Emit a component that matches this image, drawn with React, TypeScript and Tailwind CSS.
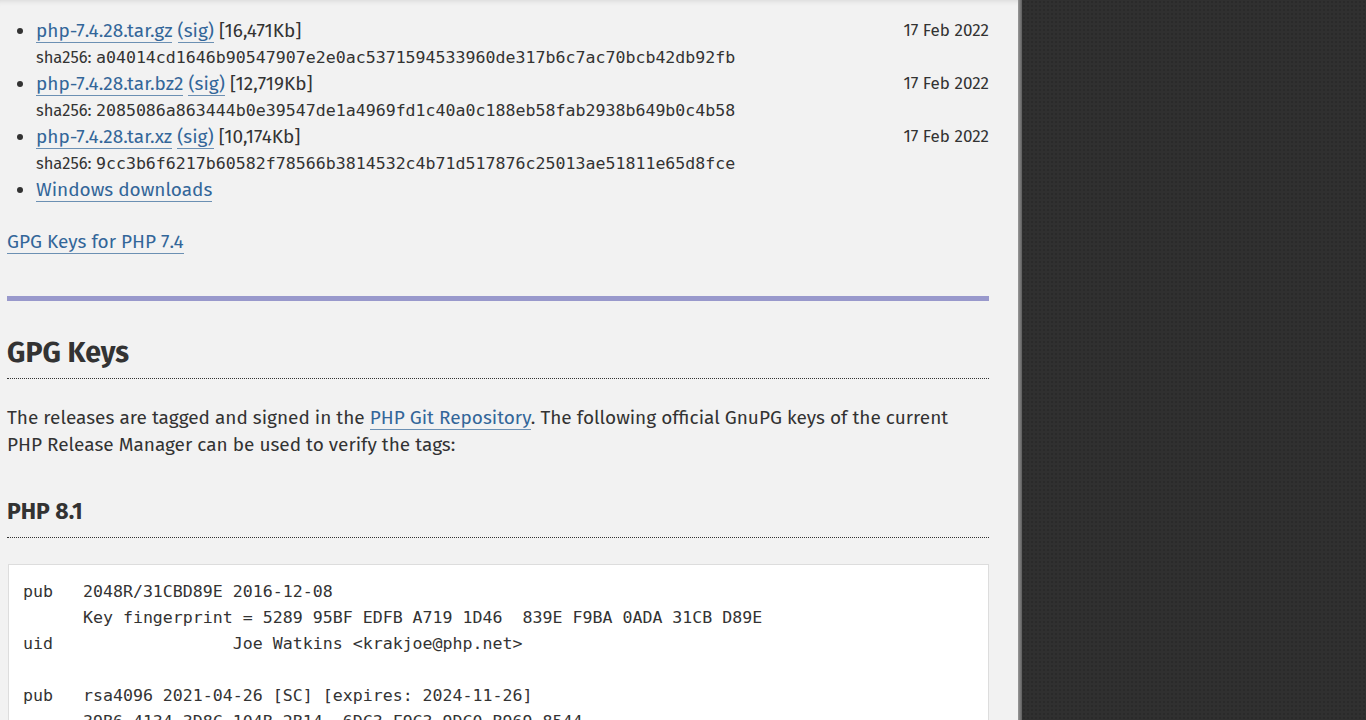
import React from 'react'

const sans = "font-['Fira_Sans','Lato','Open_Sans',sans-serif]"
const mono = "font-['DejaVu_Sans_Mono',monospace]"

interface Release {
  file: string
  size: string
  date: string
  sha: string
}

const releases: Release[] = [
  {
    file: 'php-7.4.28.tar.gz',
    size: '[16,471Kb]',
    date: '17 Feb 2022',
    sha: 'a04014cd1646b90547907e2e0ac5371594533960de317b6c7ac70bcb42db92fb',
  },
  {
    file: 'php-7.4.28.tar.bz2',
    size: '[12,719Kb]',
    date: '17 Feb 2022',
    sha: '2085086a863444b0e39547de1a4969fd1c40a0c188eb58fab2938b649b0c4b58',
  },
  {
    file: 'php-7.4.28.tar.xz',
    size: '[10,174Kb]',
    date: '17 Feb 2022',
    sha: '9cc3b6f6217b60582f78566b3814532c4b71d517876c25013ae51811e65d8fce',
  },
]

const keyBlock = `pub   2048R/31CBD89E 2016-12-08
      Key fingerprint = 5289 95BF EDFB A719 1D46  839E F9BA 0ADA 31CB D89E
uid                  Joe Watkins <krakjoe@php.net>

pub   rsa4096 2021-04-26 [SC] [expires: 2024-11-26]
      39B6 4134 3D8C 104B 2B14  6DC3 F9C3 9DC0 B969 8544`

function A({ children }: { children: React.ReactNode }) {
  return (
    <a href="#" className="text-[#369] border-b border-[#369]/70">
      {children}
    </a>
  )
}

export default function App() {
  return (
    <div className={`flex h-[720px] overflow-hidden ${sans} text-[#333]`}>
      {/* Main column */}
      <main className="w-[1018px] shrink-0 bg-[#f2f2f2] shadow-[inset_0_6px_6px_-6px_rgba(0,0,0,0.15)] pl-[7px] pr-[29px]">
        <ul className="list-disc pl-[29px] pt-[18px] text-[19px] leading-[26.5px]">
          {releases.map((r) => (
            <li key={r.file} className="marker:text-[#333]">
              <div className="flex justify-between">
                <span>
                  <A>{r.file}</A> <A>(sig)</A> {r.size}
                </span>
                <span className="text-[17px]">{r.date}</span>
              </div>
              <div className="text-[16.5px]">
                sha256: <span className={`${mono} text-[16.6px]`}>{r.sha}</span>
              </div>
            </li>
          ))}
          <li>
            <A>Windows downloads</A>
          </li>
        </ul>

        <p className="mt-[24px] text-[19px] leading-[27px]">
          <A>GPG Keys for PHP 7.4</A>
        </p>

        <hr className="mt-[41px] border-0 h-[5px] bg-[#9999cc]" />

        <h2 className="mt-[34px] text-[28.5px] font-bold leading-[36px] pb-[7px] border-b border-dotted border-[#333]">
          GPG Keys
        </h2>

        <p className="mt-[25px] max-w-[970px] text-[19px] leading-[27px]">
          The releases are tagged and signed in the <A>PHP Git Repository</A>. The following official
          GnuPG keys of the current PHP Release Manager can be used to verify the tags:
        </p>

        <h3 className="mt-[38px] text-[23px] font-bold leading-[30px] pb-[11px] border-b border-dotted border-[#333]">
          PHP 8.1
        </h3>

        <pre
          className={`mt-[26px] ml-px bg-white border border-[#ddd] px-[14px] pt-[14px] pb-4 ${mono} text-[16.6px] leading-[26px] text-[#333]`}
        >
          {keyBlock}
        </pre>
      </main>

      {/* Divider + dark sidebar */}
      <div className="w-[4px] shrink-0 bg-gradient-to-r from-[#9a9a9a] to-[#5e5e5e]" />
      <aside className="flex-1 bg-[#303030] bg-[radial-gradient(#2a2a2a_1px,transparent_1px)] bg-[length:4px_4px]" />
    </div>
  )
}
